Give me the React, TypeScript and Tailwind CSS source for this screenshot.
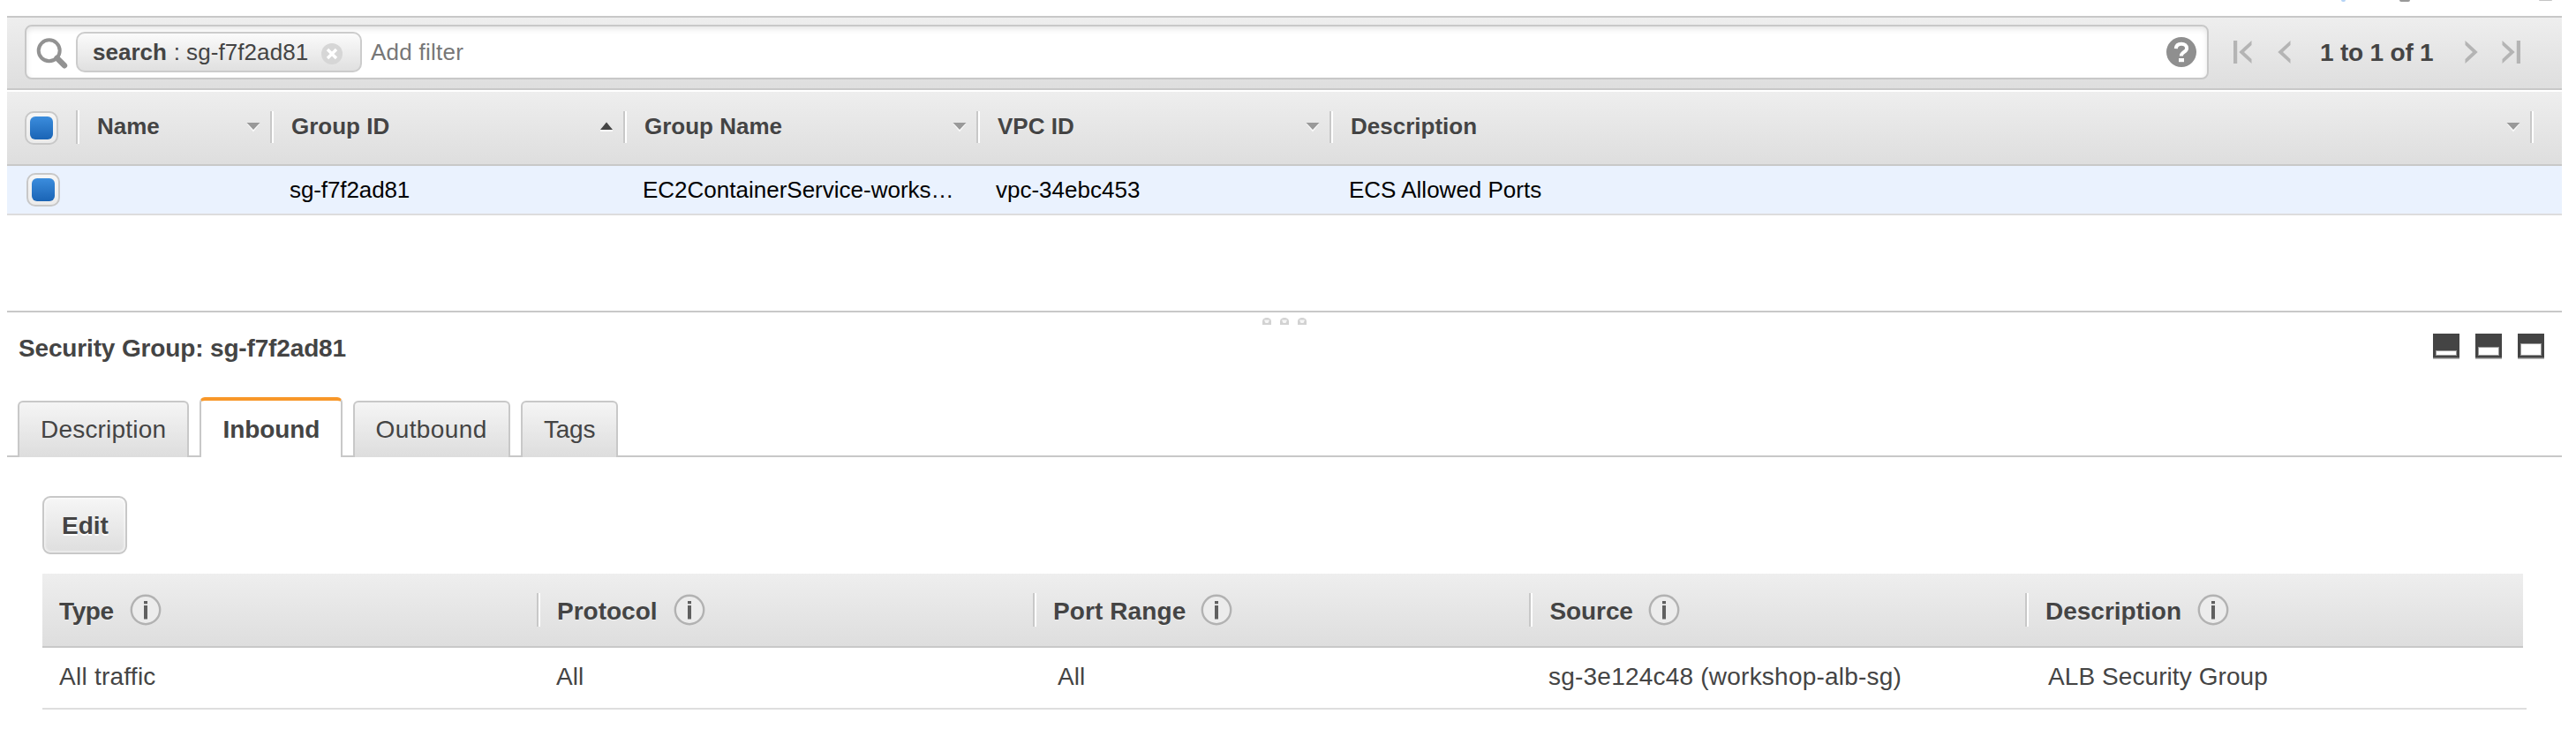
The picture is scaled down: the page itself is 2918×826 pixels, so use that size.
import React from "react";
import clsx from "clsx";

const HEADER_GRADIENT = "bg-linear-to-b from-[#eeeeee] to-[#dedede]";
const BOLD_LABEL = "font-bold text-[#444444] [text-shadow:0_1px_0_#f0f0f0]";

function Separator({ className }: { className?: string }) {
  return <span className={clsx("w-1 shrink-0 border-l-2 border-[#c8c8c8] bg-white", className)} />;
}

function Checkbox() {
  return (
    <span className="flex size-[38px] shrink-0 items-center justify-center rounded-[10px] border-2 border-[#c8c8c8] bg-linear-to-b from-[#f6f6f6] to-[#ebebeb]">
      <span className="size-[26px] rounded-[6px] bg-linear-to-b from-[#3b8ddd] to-[#1a64b5]" />
    </span>
  );
}

function Caret({ up }: { up?: boolean }) {
  return up ? (
    <svg width="16" height="12" viewBox="0 0 16 12" className="shrink-0">
      <path d="M1 9h14v2H1z" fill="#fafafa" />
      <path d="M8 .5 15 9H1z" fill="#444" />
    </svg>
  ) : (
    <svg width="16" height="12" viewBox="0 0 16 12" className="shrink-0">
      <path d="M.5 2h15L8 11.5z" fill="#fafafa" />
      <path d="M.5 1h15L8 9z" fill="#999" />
    </svg>
  );
}

function SearchIcon() {
  return (
    <svg width="36" height="36" viewBox="0 0 36 36" className="shrink-0">
      <circle cx="14.7" cy="14.3" r="12" fill="none" stroke="#929292" strokeWidth="4" />
      <path d="M23.5 22.8 32 31.3" stroke="#929292" strokeWidth="6.4" strokeLinecap="round" />
    </svg>
  );
}

function RemoveIcon() {
  return (
    <svg width="24" height="24" viewBox="0 0 24 24" className="shrink-0">
      <circle cx="12" cy="12" r="12" fill="#d6d6d6" />
      <path d="m7 7 10 10M17 7 7 17" stroke="#fff" strokeWidth="3.4" />
    </svg>
  );
}

function HelpIcon() {
  return (
    <svg width="34" height="34" viewBox="0 0 34 34" className="shrink-0">
      <circle cx="17" cy="17" r="17" fill="#8f8f8f" />
      <path
        d="M10.8 13.2C11 9.6 13.4 7.7 17 7.7c3.6 0 6.1 1.9 6.1 5 0 4.3-6.3 4.2-6.3 8.8"
        fill="none"
        stroke="#fff"
        strokeWidth="4"
      />
      <path d="M14 24h6v4.2h-6z" fill="#fff" />
    </svg>
  );
}

function PageArrow({ kind }: { kind: "first" | "prev" | "next" | "last" }) {
  const edge = kind === "first" || kind === "last";
  const flip = kind === "next" || kind === "last";
  return (
    <svg
      width={edge ? 21 : 15}
      height="26"
      viewBox={edge ? "0 0 21 26" : "6 0 15 26"}
      className={clsx("shrink-0", flip && "-scale-x-100")}
    >
      {edge && <path d="M0 0h4.2v26H0z" fill="#b4b4b4" />}
      <path d="M20.5 0v5L12 13l8.5 8v5L6.3 13z" fill="#b4b4b4" />
    </svg>
  );
}

function InfoIcon({ className }: { className?: string }) {
  return (
    <svg width="36" height="36" viewBox="0 0 36 36" className={clsx("shrink-0", className)}>
      <circle cx="18" cy="18" r="16.2" fill="#ececec" stroke="#b2b2b2" strokeWidth="2.4" />
      <path d="M16 8h4v3.2h-4zM16 13h4v15.5h-4z" fill="#606060" />
    </svg>
  );
}

function PaneIcon({ top }: { top: number }) {
  return (
    <svg width="30" height="29" viewBox="0 0 30 29">
      <path d="M0 0h30v28H0z" fill="#444" />
      <path d="M0 27.5h30V29H0z" fill="#bbb" />
      <rect x="3.5" y={top} width="23" height={24.5 - top} fill="#fff" stroke="#999" strokeWidth="1" />
    </svg>
  );
}

function Toolbar() {
  return (
    <div className={clsx("flex h-[84px] items-center border-y-2 border-[#c8c8c8] pl-5", HEADER_GRADIENT)}>
      <div className="mb-0.5 flex h-[62px] w-[2474px] items-center rounded-[8px] border-2 border-[#c8c8c8] bg-white pr-[12px] pl-[11px] shadow-[inset_0_3px_6px_rgba(0,0,0,0.10)]">
        <div className="mt-1 flex">
          <SearchIcon />
        </div>
        <div className="ml-[9px] flex h-[46px] w-[324px] items-center rounded-[10px] border-2 border-[#cccccc] bg-linear-to-b from-[#fbfbfb] to-[#e0e0e0] pl-[17px] text-[26px] text-[#444444]">
          <span className="font-bold">search</span>
          <span className="ml-[8px]">:</span>
          <span className="ml-[7px] grow tracking-[0.08px]">sg-f7f2ad81</span>
          <span className="mt-1 mr-[20px] flex">
            <RemoveIcon />
          </span>
        </div>
        <span className="ml-[10px] grow text-[26px] tracking-[0.25px] text-[#777777]">Add filter</span>
        <HelpIcon />
      </div>
      <div className="ml-[28px] mb-0.5 flex items-center">
        <PageArrow kind="first" />
        <span className="ml-[29px] flex">
          <PageArrow kind="prev" />
        </span>
        <span className="mt-0.5 ml-[33px] w-[164px] text-[28px] font-bold tracking-[-0.2px] text-[#444444]">1 to 1 of 1</span>
        <PageArrow kind="next" />
        <span className="ml-[27px] flex">
          <PageArrow kind="last" />
        </span>
      </div>
    </div>
  );
}

const columns = [
  { label: "Name", width: "w-[220px]", pad: "pl-5", value: "", valueClass: "" },
  { label: "Group ID", width: "w-[400px]", pad: "pl-5", value: "sg-f7f2ad81", valueClass: "pl-[20px] tracking-[-0.1px]", up: true },
  { label: "Group Name", width: "w-[400px]", pad: "pl-5", value: "EC2ContainerService-works…", valueClass: "pl-[20px]" },
  { label: "VPC ID", width: "w-[400px]", pad: "pl-5", value: "vpc-34ebc453", valueClass: "pl-[20px]" },
  { label: "Description", width: "w-[1360px]", pad: "pl-5", value: "ECS Allowed Ports", valueClass: "pl-5" },
];

function GroupTable() {
  return (
    <div>
      <div className={clsx("flex h-[86px] items-center border-t-2 border-b-2 border-t-white border-b-[#c8c8c8] pl-5", HEADER_GRADIENT)}>
        <Checkbox />
        <Separator className="mb-0.5 ml-5 h-[38px]" />
        {columns.map((c) => (
          <div key={c.label} className={clsx("flex h-[38px] items-center pb-0.5", c.width)}>
            <span className={clsx("mb-0.5 grow text-[26px]", BOLD_LABEL, c.pad)}>{c.label}</span>
            <span className="mr-[11px] flex">
              <Caret up={c.up} />
            </span>
            <Separator className="h-9" />
          </div>
        ))}
      </div>
      <div className="flex h-14 items-center border-b-2 border-[#dddddd] bg-[#eaf2fe] text-[26px] text-black">
        <div className="w-[80px] pl-[22px]">
          <Checkbox />
        </div>
        {columns.map((c) => (
          <div key={c.label} className={clsx("whitespace-nowrap", c.width, c.valueClass)}>
            {c.value}
          </div>
        ))}
      </div>
    </div>
  );
}

function SplitterHandle() {
  return (
    <div className="flex h-[18px] justify-center gap-2.5 border-t-2 border-[#c8c8c8] pt-[6px]">
      {[0, 1, 2].map((i) => (
        <svg key={i} width="10" height="8" viewBox="0 0 10 8">
          <path d="M0 8V4a5 4 0 0 1 10 0v4z" fill="#d2d2d2" />
          <path d="M2 2.5h6L6.5 6h-3z" fill="#f6f6f6" />
        </svg>
      ))}
    </div>
  );
}

const tabs = [
  { label: "Description", className: "w-[194px] pl-[24px] tracking-[0.2px]" },
  { label: "Inbound", className: "w-[162px] pl-[24.5px] tracking-[-0.1px]", active: true },
  { label: "Outbound", className: "w-[178px] pl-[23.5px] tracking-[0.4px]" },
  { label: "Tags", className: "w-[110px] pl-[24px] tracking-[-0.25px]" },
];

function Tabs() {
  return (
    <div className="flex h-[68px] items-end gap-3 border-b-2 border-[#c8c8c8] pl-3">
      {tabs.map((t) => (
        <div
          key={t.label}
          className={clsx(
            "-mb-0.5 flex items-center border-x-2 text-[28px] text-[#444444]",
            t.className,
            t.active
              ? "h-[68px] rounded-t-[6px] border-t-4 border-x-[#c8c8c8] border-t-[#f89728] bg-white pt-[1px] font-bold"
              : "h-16 rounded-t-[6px] border-t-2 border-[#c8c8c8] bg-linear-to-b from-[#f5f5f5] to-[#dddddd]",
          )}
        >
          {t.label}
        </div>
      ))}
    </div>
  );
}

const rules = [
  { label: "Type", labelClass: "pl-[19px] tracking-[-0.4px]", info: "ml-[18px]", value: "All traffic", valueClass: "pl-[19px] tracking-[0.25px]" },
  { label: "Protocol", labelClass: "pl-[19px]", info: "ml-[18px]", value: "All", valueClass: "pl-5" },
  { label: "Port Range", labelClass: "pl-[19px] tracking-[0.1px]", info: "ml-[17px]", value: "All", valueClass: "pl-[26px]" },
  { label: "Source", labelClass: "pl-[19.5px] tracking-[-0.1px]", info: "ml-[17px]", value: "sg-3e124c48 (workshop-alb-sg)", valueClass: "pl-5 tracking-[0.22px]" },
  { label: "Description", labelClass: "pl-[19px]", info: "ml-[18px]", value: "ALB Security Group", valueClass: "pl-6 tracking-[0.08px]" },
];

function RulesTable() {
  return (
    <div className="w-[2814px] text-[28px] text-[#444444]">
      <div className={clsx("flex h-[84px] w-[2810px] border-b-2 border-[#c8c8c8] pt-[22px]", HEADER_GRADIENT)}>
        {rules.map((r, i) => (
          <div key={r.label} className="flex h-[38px] w-[562px] items-center">
            {i > 0 && (
              <span className="-ml-0.5 flex">
                <Separator className="h-[38px]" />
              </span>
            )}
            <span className={clsx(BOLD_LABEL, "mt-[3px]", r.labelClass)}>{r.label}</span>
            <InfoIcon className={r.info} />
          </div>
        ))}
      </div>
      <div className="flex h-[70px] items-center border-b-2 border-[#dedede] pb-[3px]">
        {rules.map((r) => (
          <div key={r.label} className={clsx("w-[562px]", r.valueClass)}>
            {r.value}
          </div>
        ))}
      </div>
    </div>
  );
}

export default function App() {
  return (
    <div className="h-[826px] w-[2918px] overflow-hidden bg-white pr-4 pl-2 font-['Liberation_Sans',Arial,sans-serif] whitespace-nowrap">
      <div className="flex h-[18px] items-start">
        <span className="ml-[2644px] h-[2px] w-[5px] rounded-b-full bg-[#b5d3f5]" />
        <span className="ml-[61px] h-[2px] w-[12px] rounded-b-full bg-[#999999]" />
        <span className="ml-[146px] h-px w-[15px] rounded-b-full bg-[#c4c4c4]" />
      </div>
      <Toolbar />
      <GroupTable />
      <div className="pt-[108px]">
        <SplitterHandle />
        <div className="flex h-[80px] items-start justify-between pr-5 pl-[13px]">
          <h2 className="mt-2 text-[28px] leading-[34px] font-bold tracking-[-0.15px] text-[#444444]">Security Group: sg-f7f2ad81</h2>
          <div className="mt-2 flex gap-[18px]">
            <PaneIcon top={19.5} />
            <PaneIcon top={15.5} />
            <PaneIcon top={11.5} />
          </div>
        </div>
        <Tabs />
      </div>
      <div className="pt-11 pl-10">
        <button className="mb-[22px] flex h-[66px] w-24 items-center justify-center rounded-[9px] border-2 border-[#c8c8c8] bg-linear-to-b from-[#f6f6f6] to-[#dedede] pt-[2px] pl-[1px] text-[28px] font-bold text-[#444444] shadow-[inset_0_0_3px_1px_rgba(255,255,255,0.8)] [text-shadow:0_2px_0_#ffffff]">
          Edit
        </button>
        <RulesTable />
      </div>
    </div>
  );
}
